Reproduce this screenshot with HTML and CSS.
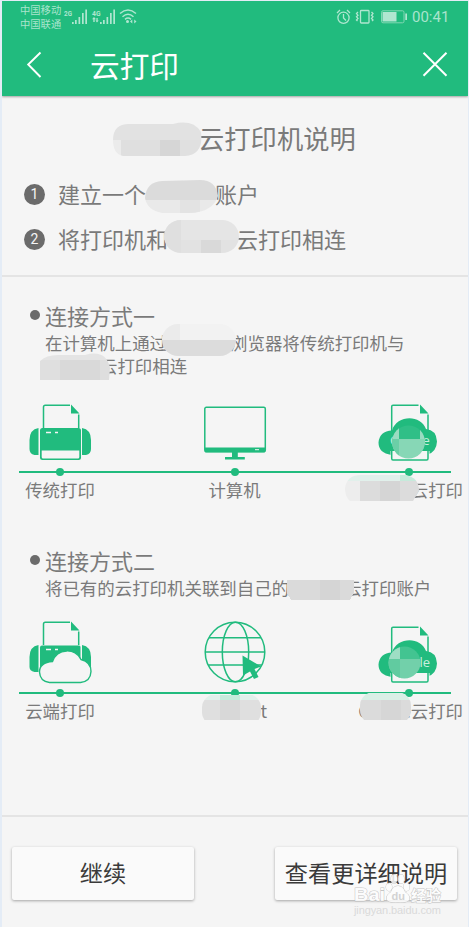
FILE: index.html
```html
<!DOCTYPE html>
<html lang="zh-CN">
<head>
<meta charset="utf-8">
<title>云打印</title>
<link rel="stylesheet" href="styles.css">
</head>
<body>
<div class="phone">
  <header class="header">
    <div class="status">
      <div class="carriers"><span>中国移动</span><span>中国联通</span></div>
      <svg class="signals" width="78" height="24" viewBox="62 5 78 24">
        <g fill="#b0e6d0">
          <path d="M72 22h1.700v2H72zM75 20h1.700v4H75zM78.500 17h1.700v7h-1.700zM82 13h1.700v11H82zM85.300 9.500h1.700V24h-1.700zM100 22h1.700v2H100zM103 20h1.700v4H103zM106.500 17h1.700v7h-1.700zM110 13h1.700v11H110zM113.300 9.500h1.700V24h-1.700z"/>
          <text x="64" y="15.500" class="net" textLength="8" lengthAdjust="spacingAndGlyphs">2G</text><text x="92" y="15.500" class="net" textLength="8.500" lengthAdjust="spacingAndGlyphs">4G</text>
          <path d="M94 17l2 2.300h-1.300V22h-1.400v-2.700H92zM97 22.500l-1.600-2h1V18h1.300v2.500h1zM126 21.500a1.500 1.500 0 1 0 3 0a1.500 1.500 0 1 0-3 0M130 21.500l2.300-2v4zM136.500 21.500l-2.300-2v4z"/>
        </g>
        <path d="M120 13.500q8-7 16 0M122.500 16.800q5.500-5 11 0M125 19.300q3-2.500 6 0" fill="none" stroke="#b0e6d0" stroke-width="1.500"/>
      </svg>
      <svg class="sysicons" width="72" height="20" viewBox="336 7 72 20">
        <g fill="none" stroke="#b0e6d0" stroke-width="1.300">
          <circle cx="343.500" cy="17.800" r="5.600"/><path d="M343.500 14v4l2.500 2.500M337 13l3-3M350 13l-3-3"/>
          <rect x="360.500" y="10.500" width="8.500" height="12.500" rx=".8"/>
          <path d="M358 12l-1.500 1.600 1.500 1.600-1.500 1.600 1.500 1.600-1.500 1.600 1 1M371.500 12l1.500 1.600-1.500 1.600 1.500 1.600-1.500 1.600 1.500 1.600-1 1"/>
          <rect x="381.500" y="10.800" width="22.500" height="12" rx="1.500" stroke="#83d7b4" stroke-width="1"/>
        </g>
        <path d="M382.500 12h14v9.500h-14zM405.300 13.500h1.700v6.500h-1.700z" fill="#b0e6d0"/>
      </svg>
      <span class="clock">00:41</span>
    </div>
    <div class="titlebar">
      <svg class="back" width="16" height="28" viewBox="0 0 16 28"><path d="M15.500 1.500L3.200 13.500 15.500 26" fill="none" stroke="#fff" stroke-width="1.900"/></svg>
      <h1>云打印</h1>
      <svg class="close" width="26" height="26" viewBox="0 0 26 26"><path d="M1.500 .8l23 23M24.500 .8l-23 23" stroke="#fff" stroke-width="2"/></svg>
    </div>
  </header>

  <section class="intro">
    <div class="row lead">
      <svg class="mask" width="89" height="34" shape-rendering="crispEdges">
        <clipPath id="m1"><path d="M16 2H60Q80-3 88 10Q91 33 72 34H10Q0 32 0 18Q0 2 16 2"/></clipPath>
        <g clip-path="url(#m1)"><path fill="#e2e2e2" d="M0 0h90v18H0z"/><path fill="#ebebeb" d="M0 18h8v16H0z"/><path fill="#dfdfdf" d="M8 18h40v16H8z"/><path fill="#d6d6d6" d="M47 18h20v16H47z"/><path fill="#e0e0e0" d="M67 18h23v16H67z"/></g>
      </svg><span>云打印机说明</span>
    </div>
    <div class="row step">
      <i class="num">1</i><span>建立一个</span>
      <svg class="mask" width="73" height="33" shape-rendering="crispEdges">
        <clipPath id="m2"><path d="M0 18Q1 2 17 1L55 0Q71 0 73 16Q68 32 45 33H17Q2 30 0 18"/></clipPath>
        <g clip-path="url(#m2)"><path fill="#dbdbdb" d="M0 0h73v20H0z"/><path fill="#e9e9e9" d="M0 20h73v13H0z"/><path fill="#e3e3e3" d="M35 20h20v13H35z"/></g>
      </svg><span>账户</span>
    </div>
    <div class="row step second">
      <i class="num">2</i><span>将打印机和</span>
      <svg class="mask" width="75" height="33" shape-rendering="crispEdges">
        <clipPath id="m3"><rect width="75" height="33" rx="17"/></clipPath>
        <g clip-path="url(#m3)"><path fill="#e5e5e5" d="M0 0h75v20H0z"/><path fill="#dfdfdf" d="M0 0h17v33H0z"/><path fill="#e2e2e2" d="M17 20h58v13H17z"/><path fill="#d9d9d9" d="M37 20h20v13H37z"/></g>
      </svg><span>云打印相连</span>
    </div>
  </section>

  <section class="method one">
    <h2><i class="bullet"></i><span>连接方式一</span></h2>
    <div class="row desc">
      <span>在计算机上通过</span>
      <svg class="mask over" width="74" height="32" shape-rendering="crispEdges">
        <clipPath id="m4"><rect width="74" height="32" rx="16"/></clipPath>
        <g clip-path="url(#m4)"><path fill="#f2f2f2" d="M0 0h74v16H0z"/><path fill="#ebebeb" d="M0 0h18v16H0z"/><path fill="#dcdcdc" d="M0 16h74v16H0z"/></g>
      </svg><span>浏览器将传统打印机与</span>
    </div>
    <div class="row desc wrapped">
      <svg class="mask" width="71" height="27" shape-rendering="crispEdges">
        <clipPath id="m5"><path d="M0 27V8Q6 2 18 2H45Q66-4 70 15L69 27"/></clipPath>
        <g clip-path="url(#m5)"><path fill="#e4e4e4" d="M0 0h71v7H0z"/><path fill="#dfdfdf" d="M0 7h20v20H0z"/><path fill="#d9d9d9" d="M20 7h40v20H20z"/><path fill="#dedede" d="M60 7h11v20H60z"/></g>
      </svg><span>云打印相连</span>
    </div>
    <div class="icons">
      <svg width="62" height="58" viewBox="0 0 62 58">
        <path d="M14.500 24V3q0-1.800 1.800-1.800H41M49.700 10.500V24" class="line"/>
        <path d="M42 0.500v9h8.500z" class="fill"/>
        <path d="M9.500 24Q.5 25.500.5 36v9q0 5 5 6h4zM53 24q9 1.500 9 12v9q0 5-5 6h-4z" class="fill"/>
        <rect x="11" y="24" width="41" height="32" rx="2.500" class="fill"/><path d="M12.700 46.500h37.600V53q0 1.500-1.500 1.500H14.200q-1.500 0-1.500-1.500z" fill="#f5f5f5"/>
        <path d="M17 28.500h5M26 28.500h3" stroke="#f5f5f5" stroke-width="1.400"/>
      </svg>
      <svg width="62" height="58" viewBox="0 0 62 58">
        <rect x=".8" y="3.300" width="60.500" height="44.500" rx="1.500" class="line"/>
        <path d="M1 43.500h60v4.800H1zM28 48h5.800v5h7v2.400H21V53h7z" class="fill"/><path d="M51 45.700h4" stroke="#f5f5f5" stroke-width="1"/>
      </svg>
      <svg width="62" height="58" viewBox="-1.500 0 62 58">
        <path d="M12.200 30V2.500q0-1.300 1.300-1.300H39M48.500 10.500V30" class="line"/>
        <path d="M40.500.5v9h8.500z" class="fill"/>
        <path d="M12 51Q-1 49-1 38.500Q0 27 12.500 26.500C17 11 41 10 46.500 25Q57 26 57.500 37.500Q57 48 48 50.500z" class="fill"/>
        <path d="M11 47H50V57H11z" fill="#f5f5f5"/>
        <path d="M12.200 47V54.500q0 1.500 1.300 1.500H47.200q1.300 0 1.300-1.500V47" class="line"/>
        <text x="10.500" y="41" class="brand">G</text><text x="43" y="41" class="brand">e</text>
        <clipPath id="c1"><circle cx="29" cy="38" r="16.500"/></clipPath><g clip-path="url(#c1)" shape-rendering="crispEdges"><path fill="#30bf87" d="M11 20h36v15H11z"/><path fill="#9adcc1" d="M11 20h8.500v15H11zM40 20h8v15h-8z"/><path fill="#87d7b6" d="M11 35h36v21H11z"/><path fill="#6bcfa7" d="M11 35h8.500v21H11z"/></g>
      </svg>
    </div>
    <div class="track"><i></i><i></i><i></i></div>
    <div class="labels">
      <span>传统打印</span><span>计算机</span>
      <span class="cloudlabel"><svg class="mask" width="74" height="26" shape-rendering="crispEdges">
        <clipPath id="m6"><path d="M0 13Q2 0 16 0H60Q74 2 74 16L68 26H5Q0 22 0 13"/></clipPath>
        <g clip-path="url(#m6)"><path fill="#e1f0eb" d="M0 0h55v6H0z"/><path fill="#c6eadb" d="M55 0h19v6H55z"/><path fill="#ededed" d="M0 6h15v20H0z"/><path fill="#dcdcdc" d="M15 6h20v20H15z"/><path fill="#d5d5d5" d="M35 6h20v20H35z"/><path fill="#dcdcdc" d="M55 6h19v20H55z"/></g>
      </svg>云打印</span>
    </div>
  </section>

  <section class="method two">
    <h2><i class="bullet"></i><span>连接方式二</span></h2>
    <div class="row desc">
      <span>将已有的云打印机关联到自己的</span>
      <svg class="mask" width="67" height="20" shape-rendering="crispEdges">
        <path d="M0 0h67v12l-4 8H4L0 13z" fill="#dadada"/><path fill="#d5d5d5" d="M33 0h20v20H33z"/>
      </svg><span>云打印账户</span>
    </div>
    <div class="icons">
      <svg width="62" height="63" viewBox="0 0 62 63">
        <path d="M14.500 24V3q0-1.800 1.800-1.800H41M49.700 10.500V24" class="line"/>
        <path d="M42 .5v9h8.500z" class="fill"/>
        <path d="M9.500 24Q.5 25.500.5 36v10q0 4 5 5h4zM53 24q9 1.500 9 12v10h-9z" class="fill"/>
        <path d="M13 24.500h37q1.500 0 1.500 1.500v22H11V26.500q0-2 2-2z" class="fill"/><path d="M17 28.500h5M26 28.500h3" stroke="#f5f5f5" stroke-width="1.400"/>
        <path d="M20.500 61.500Q11 60.500 10.500 51Q10.500 41.500 23.500 40.500C28 27 47 26.500 52 38.500Q62 41 62 50.500Q61.500 60.500 51.500 61.500z" fill="#f5f5f5" stroke="#21bb7e" stroke-width="1.400"/>
      </svg>
      <svg width="62" height="63" viewBox="0 0 62 63">
        <g class="line"><circle cx="31" cy="31" r="29.800"/><ellipse cx="31.500" cy="31" rx="13.200" ry="29.800"/><path d="M5 16.800h52M1.500 31h59.500M4.500 44h53"/></g>
        <path d="M38.500 34.500L57 45.500 50.500 48 54.500 56 50 58 46 50.500 39 54.500z" class="fill"/>
      </svg>
      <svg width="62" height="63" viewBox="-1.500 -5 62 63">
        <path d="M12.200 30V2.500q0-1.300 1.300-1.300H39M48.500 10.500V30" class="line"/>
        <path d="M40.500.5v9h8.500z" class="fill"/>
        <path d="M12 51Q-1 49-1 38.500Q0 27 12.500 26.500C17 11 41 10 46.500 25Q57 26 57.500 37.500Q57 48 48 50.500z" class="fill"/>
        <path d="M11 47H50V57H11z" fill="#f5f5f5"/>
        <path d="M12.200 47V54.500q0 1.500 1.300 1.500H47.200q1.300 0 1.300-1.500V47" class="line"/>
        <text x="40" y="40.500" class="brand">le</text>
        <clipPath id="c2"><circle cx="25" cy="36.500" r="16"/></clipPath><g clip-path="url(#c2)" shape-rendering="crispEdges"><path fill="#43c491" d="M8 18h36v15H8z"/><path fill="#9edec4" d="M8 18h12v15H8z"/><path fill="#72d0aa" d="M8 33h36v22H8z"/><path fill="#61cba0" d="M8 33h12v22H8z"/></g>
      </svg>
    </div>
    <div class="track"><i></i><i></i><i></i></div>
    <div class="labels">
      <span>云端打印</span>
      <span class="netlabel"><svg class="mask" width="59" height="25" shape-rendering="crispEdges">
        <clipPath id="m7"><rect width="59" height="32" y="-1" rx="14"/></clipPath>
        <g clip-path="url(#m7)"><path fill="#e1f0eb" d="M0 0h59v5H0z"/><path fill="#c6eadb" d="M18 0h20v5H18z"/><path fill="#dfdfdf" d="M0 5h59v20H0z"/><path fill="#d8d8d8" d="M18 5h20v20H18z"/></g>
      </svg>t</span>
      <span class="cloudlabel named">G<svg class="mask" width="51" height="27" shape-rendering="crispEdges">
        <clipPath id="m8"><rect width="51" height="32" y="-1" rx="14"/></clipPath>
        <g clip-path="url(#m8)"><path fill="#d9efe6" d="M0 0h51v7H0z"/><path fill="#dbdbdb" d="M0 7h51v20H0z"/><path fill="#d6d6d6" d="M21 7h20v20H21z"/></g>
      </svg><b>e</b>云打印</span>
    </div>
  </section>

  <footer class="actions">
    <button>继续</button>
    <button>查看更详细说明</button>
  </footer>

  <svg class="watermark" width="96" height="48" viewBox="0 0 96 48">
    <g fill="#fdfdfd" stroke="#bdbdbd" stroke-width="1" paint-order="stroke">
      <text x="3" y="29" class="wm" textLength="31" lengthAdjust="spacingAndGlyphs">Bai</text><text x="60" y="29" class="wmcn">经验</text>
      <ellipse cx="38" cy="15" rx="3" ry="4"/><ellipse cx="43" cy="7" rx="3" ry="4.500"/><ellipse cx="50" cy="7" rx="3" ry="4.500"/><ellipse cx="55.500" cy="15" rx="3" ry="4"/>
      <path d="M47 14q5 0 7 6 6 4 4 8-2 3-11 2-9 1-11-2-2-4 4-8 2-6 7-6z"/>
    </g>
    <text x="3" y="42" class="wmurl" textLength="87">jingyan.baidu.com</text>
    <text x="40.500" y="28" class="wmdu">du</text>
  </svg>
</div>
</body>
</html>
```
FILE: styles.css
```css
* { box-sizing: border-box; }
body {
  margin: 0;
  background: #e9f0fa;
  font-family: "Noto Sans CJK SC", sans-serif;
  color: #7a7a7a;
}
.phone {
  position: relative;
  height: 927px;
  border: solid #e4ecf6;
  border-width: 1px 1px 0 2px;
  background: #f5f5f5;
  overflow: hidden;
}
svg { display: block; flex: none; overflow: visible; }
.line { fill: none; stroke: #21bb7e; stroke-width: 1.5; }
.fill { fill: #21bb7e; }

.header {
  height: 95px;
  background: #21bb7e;
  box-shadow: 0 1px 2px #0005;
}
.status { display: flex; height: 33px; color: #a9e4cd; }
.carriers {
  display: flex;
  flex-direction: column;
  width: 41px;
  margin: 2px 1px 0 18px;
  font-size: 10.3px;
  line-height: 14px;
  white-space: nowrap;
}
.signals { margin-top: 4px; }
.net { font: bold 8px "Roboto", sans-serif; }
.sysicons { margin: 6px 4px 0 auto; }
.clock { margin: 7px 19px 0 0; width: 37px; font: 15px/19px "Roboto", sans-serif; }
.titlebar { display: flex; align-items: center; height: 62px; padding: 0 20px 0 23px; }
.titlebar h1 {
  margin: -1px auto 0 49px;
  font-size: 29.7px;
  line-height: 40px;
  font-weight: 400;
  color: #fff;
}

.row { display: flex; align-items: center; white-space: nowrap; }
.row span { flex: none; }
.mask { position: relative; z-index: 1; }
.intro { height: 181px; padding-top: 21px; border-bottom: 2px solid #e4e4e4; }
.lead { height: 44px; padding-left: 111px; font-size: 26.3px; }
.lead .mask { margin-right: -4px; }
.lead span { margin-top: -4px; }
.step span { margin-top: -4px; }
.step { height: 45px; margin-top: 11px; padding-left: 22px; font-size: 22px; }
.step.second { margin-top: 0; }
.num {
  width: 21px;
  height: 21px;
  margin-right: 13px;
  border-radius: 50%;
  background: #6b6b6b;
  color: #f5f5f5;
  font: 14px/21px "Roboto", sans-serif;
  text-align: center;
}
.step .mask { margin: 4px -3px 0 -1px; }
.step.second .mask { margin: -6px -3px 0 -4px; }

.method { height: 245px; padding-top: 24px; }
.method h2 {
  display: flex;
  align-items: center;
  height: 30px;
  margin: 0;
  padding-left: 28px;
  font-size: 22px;
  line-height: 30px;
  font-weight: 400;
}
.method h2 span { margin-top: -3px; }
.bullet { width: 10px; height: 10px; margin: -2px 5px 0 0; border-radius: 50%; background: #6b6b6b; }
.desc { height: 23px; padding-left: 43px; font-size: 17.45px; }
.desc .mask { margin: 4px -10px 0 -2px; }
.desc .mask.over { margin: -6px -6px 0 -5px; }
.wrapped { padding-left: 38px; }
.wrapped .mask { margin: 2px -11px 0 0; }
.icons { display: flex; justify-content: space-between; padding: 0 28px 0 27px; }
.one .icons { margin-top: 27px; }
.two .icons { margin-top: 22px; }
.track {
  display: flex;
  justify-content: space-between;
  height: 8px;
  margin: 5px 17px 0;
  padding: 0 38px 0 37px;
  background: linear-gradient(#21bb7e, #21bb7e) 0 50% / 100% 2px no-repeat;
}
.one .track { margin-top: 6px; }
.track i { width: 8px; height: 8px; border-radius: 50%; background: #21bb7e; }
.labels {
  display: grid;
  grid-template-columns: 62px 62px 62px;
  justify-content: space-between;
  height: 30px;
  margin-top: -1px;
  padding: 0 28px 0 27px;
  font-size: 17.4px;
  line-height: 30px;
  white-space: nowrap;
}
.labels span { display: flex; justify-content: center; width: 62px; }
.labels .cloudlabel { justify-content: flex-end; width: 85px; }
.cloudlabel .mask { margin: 0 -8px 0 0; }
.labels .netlabel { justify-content: flex-start; }
.netlabel .mask { margin: -1px 0 0 -2px; }
.named .mask { margin: -3px -10px 0 -10px; }
.named b { font-weight: 400; }

.actions {
  display: flex;
  justify-content: space-between;
  height: 112px;
  margin-top: 48px;
  padding: 30px 11px 0 10px;
  border-top: 2px solid #e4e4e4;
}
.actions button {
  width: 182px;
  height: 53px;
  padding: 0 0 3px;
  border: 0;
  border-radius: 2px;
  background: #fafafa;
  box-shadow: 0 1px 3px #0005;
  color: #3a3a3a;
  font: 23.2px/34px "Noto Sans CJK SC", sans-serif;
  white-space: nowrap;
}
.brand { font: 13px "Open Sans", sans-serif; fill: #c9eedf; }
.watermark { position: absolute; left: 349px; top: 871px; opacity: .85; }
.wm { font: bold 19px "Liberation Sans", sans-serif; }
.wmcn { font: bold 15px "Noto Sans CJK SC", sans-serif; }
.wmurl { font: 11px "Liberation Sans", sans-serif; fill: #d6d6d6; }
.wmdu { font: bold 11px "Liberation Sans", sans-serif; fill: #ccc; }
```
